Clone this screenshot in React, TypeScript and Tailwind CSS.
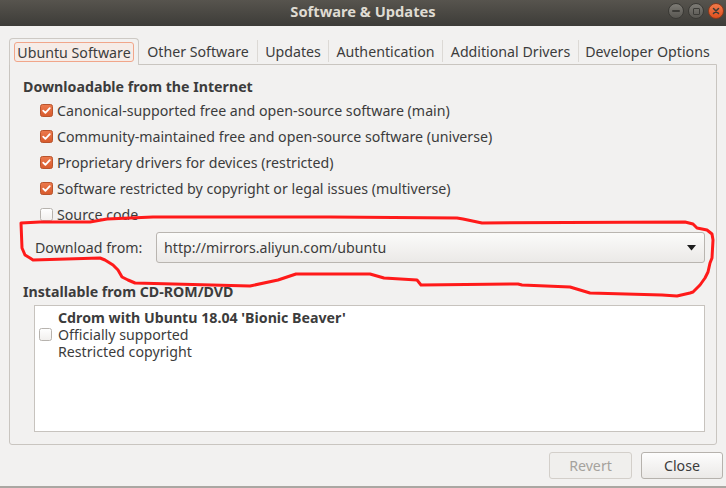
import React from 'react';

const font = "font-['Noto_Sans','Open_Sans',sans-serif]";

const CheckBox = ({ checked }: { checked: boolean }) => (
  <svg width="13" height="13" viewBox="0 0 13 13" className="shrink-0">
    <defs>
      <linearGradient id="chk" x1="0" y1="0" x2="0" y2="1">
        <stop offset="0" stopColor="#ec7a4d" />
        <stop offset="1" stopColor="#d75a2c" />
      </linearGradient>
      <linearGradient id="unchk" x1="0" y1="0" x2="0" y2="1">
        <stop offset="0" stopColor="#ffffff" />
        <stop offset="1" stopColor="#f1efed" />
      </linearGradient>
    </defs>
    {checked ? (
      <>
        <rect x="0.5" y="0.5" width="12" height="12" rx="2" fill="url(#chk)" stroke="#b8542d" />
        <path d="M3.2 6.6 L5.4 8.8 L9.8 4.2" fill="none" stroke="#ffffff" strokeWidth="1.8" strokeLinecap="round" strokeLinejoin="round" />
      </>
    ) : (
      <rect x="0.5" y="0.5" width="12" height="12" rx="2" fill="url(#unchk)" stroke="#b7b3ae" />
    )}
  </svg>
);

const sources = [
  { label: 'Canonical-supported free and open-source software (main)', checked: true },
  { label: 'Community-maintained free and open-source software (universe)', checked: true },
  { label: 'Proprietary drivers for devices (restricted)', checked: true },
  { label: 'Software restricted by copyright or legal issues (multiverse)', checked: true },
  { label: 'Source code', checked: false },
];

const tabs = [
  { label: 'Other Software', w: 'w-[118px]' },
  { label: 'Updates', w: 'w-[70px]' },
  { label: 'Authentication', w: 'w-[113px]' },
  { label: 'Additional Drivers', w: 'w-[135px]' },
  { label: 'Developer Options', w: 'w-[137px]' },
];

// hand-drawn red marker around the mirror row
const scribble =
  '21,223 40,222 90,222 107,219 153,217 330,217 457,218 463,219 482,223 685,222 693,224 697,228 707,230 712,234 713,240 712,258 710,263 708,272 705,278 700,285 693,292 690,293 677,296 662,295 590,293 570,287 522,285 518,284 421,285 417,280 384,278 370,274 296,274 278,280 250,286 135,283 128,280 122,277 118,270 113,265 105,260 100,258 33,260 30,258 25,255 22,248 21,223';

export default function App() {
  return (
    <div className={`relative w-[726px] h-[488px] overflow-hidden bg-[#f2f1f0] text-[#3c3c3c] text-[14.2px] leading-[17px] flex flex-col ${font}`}>
      {/* Title bar */}
      <div className="relative h-[26px] shrink-0 bg-gradient-to-b from-[#57544e] to-[#3d3c38] flex items-center justify-center pb-[3px]">
        <span className="text-[#dfdbd2] font-bold text-[14.7px]">Software &amp; Updates</span>
        <div className="absolute right-[2px] top-[3px] flex gap-[4px]">
          <div className="w-[16px] h-[16px] rounded-full bg-gradient-to-b from-[#7e7c76] to-[#585651] border border-[#3a3935] flex items-center justify-center">
            <div className="w-[8px] h-[2px] bg-[#3c3b37] rounded-full" />
          </div>
          <div className="w-[16px] h-[16px] rounded-full bg-gradient-to-b from-[#7e7c76] to-[#585651] border border-[#3a3935] flex items-center justify-center">
            <div className="w-[7px] h-[7px] border-[1.5px] border-[#3c3b37] rounded-[1px]" />
          </div>
          <div className="w-[16px] h-[16px] rounded-full bg-gradient-to-b from-[#f37b4b] to-[#df4f1c] border border-[#8f3a1c] flex items-center justify-center">
            <svg width="8" height="8" viewBox="0 0 8 8">
              <path d="M1.5 1.5 L6.5 6.5 M6.5 1.5 L1.5 6.5" stroke="#3c3b37" strokeWidth="1.5" strokeLinecap="round" />
            </svg>
          </div>
        </div>
      </div>

      <div className="flex-1 flex flex-col pl-[9px] pr-[3px] pt-[12px]">
        {/* Tabs */}
        <div className="flex h-[26px] items-stretch">
          <div className="relative z-10 w-[130px] h-[27px] border border-b-0 border-[#cdc9c4] rounded-t-[4px] bg-[#f2f1f0] flex items-start justify-center pt-[3px]">
            <div className="h-[20px] px-[2px] border border-[#f1a68a] rounded-[3px] bg-[#f6ece7] flex items-center">
              Ubuntu Software
            </div>
          </div>
          {tabs.map((t, i) => (
            <React.Fragment key={t.label}>
              <div className={`${t.w} flex items-center justify-center pt-[1px]`}>{t.label}</div>
              {i < tabs.length - 1 && <div className="w-px bg-[#dcd9d5] my-[2px]" />}
            </React.Fragment>
          ))}
        </div>

        {/* Panel */}
        <div className="h-[381px] mr-[6px] border border-[#c9c5c0] rounded-b-[3px] flex flex-col pl-[13px] pr-[11px] pt-[11px]">
          <div className="h-[20px] flex items-center font-bold">Downloadable from the Internet</div>
          <div className="mt-[1px] flex flex-col">
            {sources.map((s) => (
              <div key={s.label} className="h-[26px] flex items-center gap-[4px] pl-[17px]">
                <CheckBox checked={s.checked} />
                <span>{s.label}</span>
              </div>
            ))}
          </div>

          <div className="mt-[5px] flex items-center pl-[12px]">
            <span className="w-[121px] shrink-0">Download from:</span>
            <div className="flex-1 h-[31px] border border-[#b9b5b0] rounded-[3px] bg-gradient-to-b from-[#fbfbfa] to-[#ebe9e7] flex items-center pl-[7px] pr-[8px]">
              <span className="flex-1">http://mirrors.aliyun.com/ubuntu</span>
              <svg width="9" height="6" viewBox="0 0 9 6">
                <path d="M0 0 L9 0 L4.5 5.5 Z" fill="#1e1e1e" />
              </svg>
            </div>
          </div>

          <div className="mt-[18px] h-[20px] flex items-center font-bold">Installable from CD-ROM/DVD</div>
          <div className="mt-[4px] ml-[11px] h-[127px] border border-[#c7c3be] bg-white flex items-start pt-[3px] pl-[4px]">
            <div className="h-[51px] flex items-center">
              <CheckBox checked={false} />
            </div>
            <div className="ml-[6px] flex flex-col">
              <span className="font-bold">Cdrom with Ubuntu 18.04 'Bionic Beaver'</span>
              <span>Officially supported</span>
              <span>Restricted copyright</span>
            </div>
          </div>
        </div>

        {/* Buttons */}
        <div className="mt-[7px] flex justify-end gap-[9px]">
          <button className="w-[83px] h-[27px] border border-[#d3cfca] rounded-[3px] bg-[#f0efed] text-[#a5a29d]">Revert</button>
          <button className="w-[82px] h-[27px] border border-[#b6b2ad] rounded-[3px] bg-gradient-to-b from-[#fdfdfd] to-[#ebe9e7] text-[#3c3c3c]">Close</button>
        </div>
      </div>

      <div className="h-[2px] shrink-0 bg-[#aaa7a2]" />

      {/* Red annotation */}
      <svg className="absolute inset-0 pointer-events-none" width="726" height="488" viewBox="0 0 726 488">
        <polyline points={scribble} fill="none" stroke="#ff1a1a" strokeWidth="3" strokeLinejoin="round" strokeLinecap="round" />
      </svg>
    </div>
  );
}
